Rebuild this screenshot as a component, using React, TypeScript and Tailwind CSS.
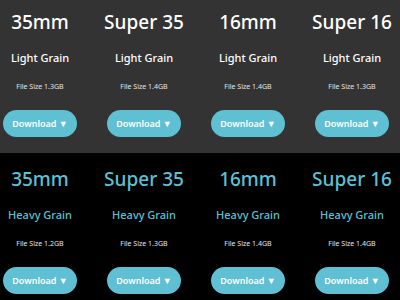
import React from "react";

type Item = { title: string; size: string };

const light: Item[] = [
  { title: "35mm", size: "1.3GB" },
  { title: "Super 35", size: "1.4GB" },
  { title: "16mm", size: "1.4GB" },
  { title: "Super 16", size: "1.3GB" },
];
const heavy: Item[] = [
  { title: "35mm", size: "1.2GB" },
  { title: "Super 35", size: "1.3GB" },
  { title: "16mm", size: "1.4GB" },
  { title: "Super 16", size: "1.4GB" },
];

function Card({ item, grain, accent }: { item: Item; grain: string; accent: boolean }) {
  return (
    <div className="flex w-[80px] flex-col items-center">
      <div
        className={`whitespace-nowrap text-[19px] leading-[24px] font-medium ${accent ? "text-[#5fc0d3]" : "text-white"}`}
      >
        {item.title}
      </div>
      <div
        className={`mt-[17px] whitespace-nowrap text-[11px] leading-[14px] font-medium ${accent ? "text-[#5fc0d3]" : "text-white"}`}
      >
        {grain}
      </div>
      <div className="mt-[17px] whitespace-nowrap text-[7px] leading-[10px] text-[#e6e6e6]">
        File Size {item.size}
      </div>
      <button className="mt-[18px] flex h-[27px] w-[74px] items-center justify-center rounded-full bg-[#5fc0d3] text-[9px] font-semibold text-white">
        Download&nbsp;▼
      </button>
    </div>
  );
}

export default function App() {
  return (
    <div
      className="h-[300px] w-[400px] overflow-hidden bg-black"
      style={{ fontFamily: '"Noto Sans", sans-serif' }}
    >
      <div className="flex h-[153px] gap-[24px] bg-[#333333] pt-[10px]">
        {light.map((it, i) => (
          <Card key={i} item={it} grain="Light Grain" accent={false} />
        ))}
      </div>
      <div className="flex gap-[24px] bg-black pt-[14px]">
        {heavy.map((it, i) => (
          <Card key={i} item={it} grain="Heavy Grain" accent={true} />
        ))}
      </div>
    </div>
  );
}
